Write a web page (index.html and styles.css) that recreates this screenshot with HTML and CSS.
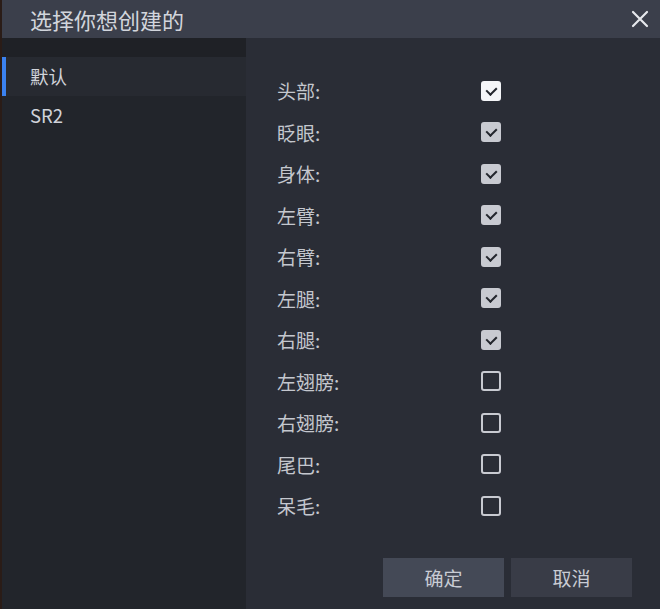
FILE: index.html
```html
<!DOCTYPE html>
<html lang="zh">
<head>
  <meta charset="UTF-8">
  <title>选择你想创建的</title>
  <link rel="stylesheet" href="styles.css">
</head>
<body>
  <div class="dialog">
    <header class="titlebar">
      <h1>选择你想创建的</h1>
      <button class="close" aria-label="关闭">
        <svg width="18" height="18" viewBox="0 0 18 18"><path d="M2 2L16 16M16 2L2 16" stroke="#e6e8ec" stroke-width="2.2" stroke-linecap="round"/></svg>
      </button>
    </header>
    <div class="content">
      <aside class="sidebar">
        <div class="sidebar-top"></div>
        <div class="item active">默认</div>
        <div class="item">SR2</div>
      </aside>
      <main class="panel">
        <ul class="parts">
          <li><span>头部:</span><span class="box on"></span></li>
          <li><span>眨眼:</span><span class="box on dim"></span></li>
          <li><span>身体:</span><span class="box on dim"></span></li>
          <li><span>左臂:</span><span class="box on dim"></span></li>
          <li><span>右臂:</span><span class="box on dim"></span></li>
          <li><span>左腿:</span><span class="box on dim"></span></li>
          <li><span>右腿:</span><span class="box on dim"></span></li>
          <li><span>左翅膀:</span><span class="box"></span></li>
          <li><span>右翅膀:</span><span class="box"></span></li>
          <li><span>尾巴:</span><span class="box"></span></li>
          <li><span>呆毛:</span><span class="box"></span></li>
        </ul>
        <div class="actions">
          <button class="btn primary">确定</button>
          <button class="btn">取消</button>
        </div>
      </main>
    </div>
  </div>
</body>
</html>
```

FILE: styles.css
```css
html, body { margin: 0; height: 100%; }
body {
  background: #2a1c17;
  font-family: "Noto Sans CJK SC", "Noto Sans", sans-serif;
  color: #c9ccd3;
  padding-left: 2px;
  box-sizing: border-box;
}
.dialog { height: 609px; display: flex; flex-direction: column; background: #2a2d36; }
.titlebar {
  height: 38px;
  background: #3b3f4b;
  display: flex;
  align-items: center;
  justify-content: space-between;
  padding: 0 8px 0 28px;
}
.titlebar h1 { margin: 0; font-size: 22px; font-weight: normal; color: #d2d5dc; }
.close { background: none; border: none; padding: 0; width: 24px; height: 24px; display: flex; align-items: center; justify-content: center; }
.content { flex: 1; display: flex; }
.sidebar { width: 244px; background: #22252b; }
.sidebar-top { height: 19px; background: #1f2126; }
.item { height: 39px; line-height: 39px; padding-left: 28px; font-size: 18.5px; color: #d0d3da; }
.item.active { background: #272a31; border-left: 4px solid #3b82f0; padding-left: 24px; }
.panel { flex: 1; display: flex; flex-direction: column; padding: 32px 28px 12px 31px; }
.parts { list-style: none; margin: 0; padding: 0; }
.parts li { height: 41.5px; display: flex; align-items: center; font-size: 19px; color: #c4c7ce; }
.parts li span:first-child { width: 204px; }
.box {
  width: 20px; height: 20px;
  box-sizing: border-box;
  border: 2px solid #c8cad1;
  border-radius: 3px;
  position: relative;
}
.box.on { background: #f4f5f8; border-color: #f4f5f8; }
.box.on.dim { background: #c8cad1; border-color: #c8cad1; }
.box.on::after {
  content: "";
  position: absolute;
  left: 5px; top: 2px;
  width: 5px; height: 8px;
  border: solid #23262d;
  border-width: 0 2.5px 2.5px 0;
  transform: rotate(45deg);
}
.actions { margin-top: auto; display: flex; justify-content: flex-end; gap: 7px; }
.btn {
  width: 121px; height: 39px;
  border: none;
  font-family: inherit;
  font-size: 19px;
  color: #c9ccd4;
  background: #393c47;
}
.btn.primary { background: #444956; }
```
